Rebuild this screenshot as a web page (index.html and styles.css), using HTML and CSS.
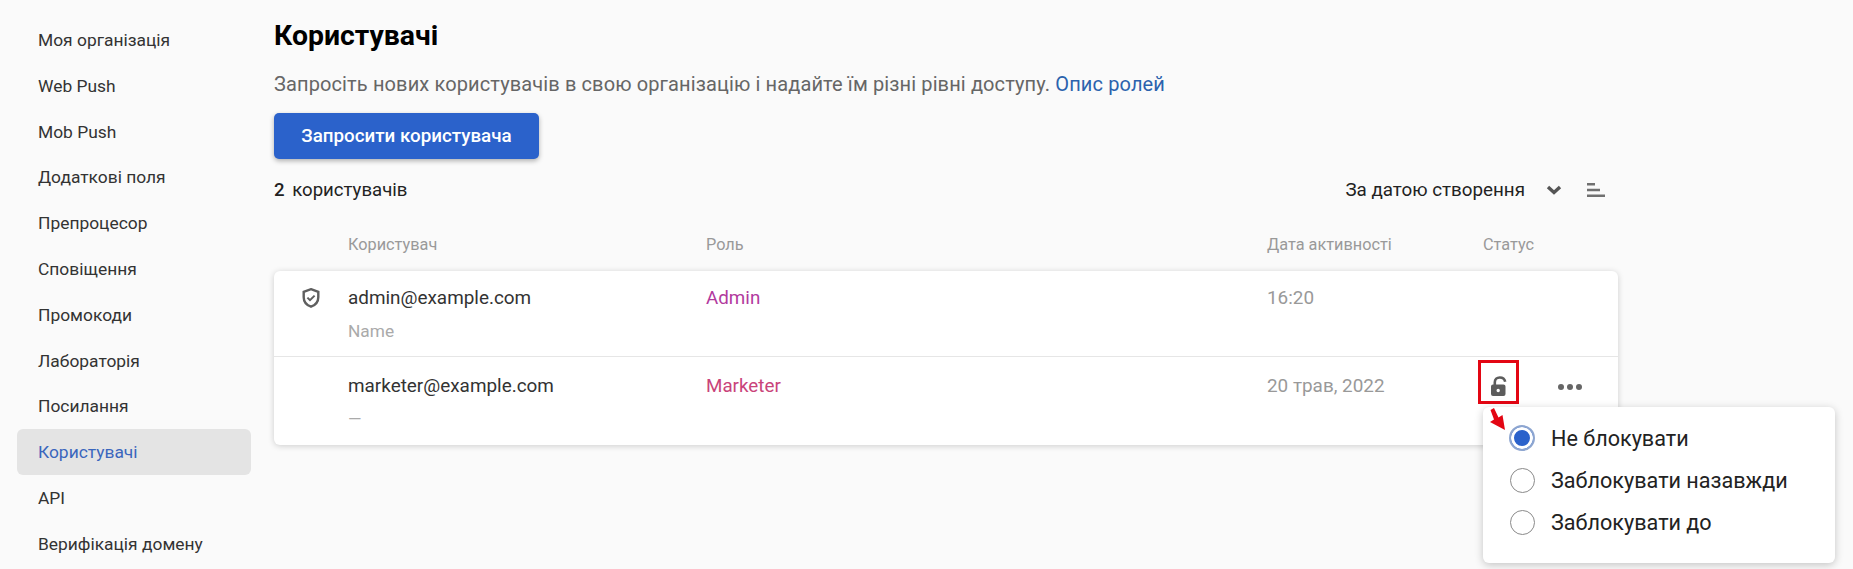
FILE: index.html
```html
<!DOCTYPE html>
<html lang="uk">
<head>
    <meta charset="UTF-8">
    <meta name="viewport" content="width=device-width, initial-scale=1.0">
    <title>Користувачі</title>
    <link rel="stylesheet" href="styles.css">
</head>
<body>
    <div class="layout">
        <nav class="sidebar">
            <a class="nav-item">Моя організація</a>
            <a class="nav-item">Web Push</a>
            <a class="nav-item">Mob Push</a>
            <a class="nav-item">Додаткові поля</a>
            <a class="nav-item">Препроцесор</a>
            <a class="nav-item">Сповіщення</a>
            <a class="nav-item">Промокоди</a>
            <a class="nav-item">Лабораторія</a>
            <a class="nav-item">Посилання</a>
            <a class="nav-item active">Користувачі</a>
            <a class="nav-item">API</a>
            <a class="nav-item">Верифікація домену</a>
        </nav>

        <main class="content">
            <h1 class="page-title">Користувачі</h1>
            <p class="page-desc">Запросіть нових користувачів в свою організацію і надайте їм різні рівні доступу. <a class="link">Опис ролей</a></p>
            <button class="btn-primary">Запросити користувача</button>

            <div class="toolbar">
                <div class="users-count"><b>2</b> користувачів</div>
                <div class="sort">
                    <span class="sort-label">За датою створення</span>
                    <svg class="sort-chevron" width="16" height="10" viewBox="0 0 16 10"><path d="M2 2l6 5.500L14 2" fill="none" stroke="#555" stroke-width="3.400"/></svg>
                    <svg class="sort-order" width="18" height="14" viewBox="0 0 18 14"><path d="M0 1.200h8M0 7h13M0 12.800h18" fill="none" stroke="#707070" stroke-width="2.400"/></svg>
                </div>
            </div>

            <div class="table-head">
                <div></div>
                <div>Користувач</div>
                <div>Роль</div>
                <div>Дата активності</div>
                <div>Статус</div>
            </div>

            <div class="card">
                <div class="row">
                    <div class="row-icon">
                        <svg width="18" height="20" viewBox="0 0 18 20"><path d="M9 1.200l7.300 2.600v5.400c0 4.400-3 7.900-7.300 9.500-4.300-1.600-7.300-5.100-7.300-9.500V3.800z" fill="none" stroke="#5f5f5f" stroke-width="2.400"/><path d="M5.400 9.600l2.600 2.600 4.600-4.600" fill="none" stroke="#5f5f5f" stroke-width="2"/></svg>
                    </div>
                    <div class="user">
                        <div class="user-email">admin@example.com</div>
                        <div class="user-name">Name</div>
                    </div>
                    <div class="role role-admin">Admin</div>
                    <div class="date">16:20</div>
                </div>
                <div class="row row-last">
                    <div class="row-icon"></div>
                    <div class="user">
                        <div class="user-email">marketer@example.com</div>
                        <div class="user-name">—</div>
                    </div>
                    <div class="role role-marketer">Marketer</div>
                    <div class="date">20 трав, 2022</div>
                    <div class="status">
                        <svg width="16" height="20" viewBox="0 0 16 20"><path d="M3.800 9V6.200C3.800 3.400 5.900 1.500 8.800 1.500c2.800 0 4.800 1.500 5.400 4.300" fill="none" stroke="#5c5c5c" stroke-width="2.600"/><path fill-rule="evenodd" d="M2 8.500h10.500a2 2 0 0 1 2 2V18a2 2 0 0 1-2 2H2a2 2 0 0 1-2-2v-7.500a2 2 0 0 1 2-2zm5.200 4.300a1.700 1.700 0 1 0 0 3.400 1.700 1.700 0 0 0 0-3.400z" fill="#5c5c5c"/></svg>
                    </div>
                    <div class="more"><i></i><i></i><i></i></div>
                </div>
            </div>
        </main>
    </div>

    <!-- annotation over the status icon -->
    <div class="highlight-box"></div>
    <svg class="highlight-arrow" width="16" height="24" viewBox="0 0 16 24"><path d="M4 0l4.500 9.500 4-2.500L15 22 0 14l4-2.500L0.500 2z" fill="#e30613"/></svg>

    <div class="popover">
        <label class="option">
            <span class="radio checked"></span>
            Не блокувати
        </label>
        <label class="option">
            <span class="radio"></span>
            Заблокувати назавжди
        </label>
        <label class="option">
            <span class="radio"></span>
            Заблокувати до
        </label>
    </div>
</body>
</html>
```

FILE: styles.css
```css
html, body {
    height: 100%;
}

body {
    margin: 0;
    background-color: #fafafa;
    font-family: Roboto, "Noto Sans", sans-serif;
    color: #222;
    overflow: hidden;
}

.layout {
    display: flex;
}

.sidebar {
    width: 234px;
    margin-left: 17px;
    padding-top: 17px;
    flex-shrink: 0;
}

.nav-item {
    display: block;
    height: 45.8px;
    line-height: 46px;
    padding-left: 21px;
    font-size: 17.4px;
    color: #333;
    border-radius: 6px;
    box-sizing: border-box;
}

.nav-item.active {
    background-color: #e4e4e4;
    color: #3a66bd;
}

.content {
    width: 1344px;
    margin-left: 23px;
}

.page-title {
    margin: 20px 0 0;
    font-size: 28.4px;
    line-height: 32px;
    font-weight: 700;
    color: #000;
}

.page-desc {
    margin: 19px 0 0;
    font-size: 20px;
    letter-spacing: 0.12px;
    line-height: 26px;
    color: #666;
}

.link {
    color: #2b62ad;
}

.btn-primary {
    display: block;
    width: 265px;
    height: 46px;
    margin-top: 16px;
    border: none;
    border-radius: 5px;
    background-color: #2b62cb;
    box-shadow: 0 2px 5px rgba(0, 0, 0, 0.3);
    color: #fff;
    font-family: inherit;
    font-size: 18.8px;
    font-weight: 500;
}

.toolbar {
    display: flex;
    justify-content: space-between;
    align-items: center;
    height: 30px;
    margin-top: 16px;
}

.users-count {
    font-size: 18.6px;
    color: #222;
}

.users-count b {
    font-weight: 500;
    margin-right: 3px;
}

.sort {
    display: flex;
    align-items: center;
    margin-right: 13px;
}

.sort-label {
    font-size: 18.8px;
    color: #222;
}

.sort-chevron {
    margin-left: 21px;
}

.sort-order {
    margin-left: 25px;
}

.table-head {
    display: grid;
    grid-template-columns: 74px 358px 561px 216px 1fr;
    height: 20px;
    margin-top: 30px;
    font-size: 16.3px;
    line-height: 20px;
    color: #999;
}

.card {
    margin-top: 16px;
    background: #fff;
    border-radius: 6px;
    box-shadow: 0 1px 6px rgba(0, 0, 0, 0.18);
}

.row {
    display: grid;
    grid-template-columns: 74px 358px 561px 216px 70px 1fr;
    height: 86px;
    box-sizing: border-box;
    padding-top: 15px;
    border-bottom: 1px solid #e6e6e6;
}

.row-last {
    height: 88px;
    border-bottom: none;
    padding-top: 17px;
}

.row-icon {
    display: flex;
    justify-content: center;
    align-items: flex-start;
    padding-top: 2px;
}

.row-icon svg {
    margin-left: -1px;
}

.user-email {
    font-size: 18.9px;
    line-height: 24px;
    color: #333;
}

.user-name {
    margin-top: 9px;
    font-size: 17.3px;
    line-height: 24px;
    color: #aaa;
}

.row-last .user-name {
    margin-top: 9px;
}

.role {
    font-size: 18.8px;
    line-height: 24px;
}

.role-admin {
    color: #b23a9e;
}

.role-marketer {
    color: #c9437a;
}

.date {
    font-size: 18.9px;
    line-height: 24px;
    color: #999;
}

.status {
    padding-left: 8px;
    padding-top: 2px;
}

.more {
    display: flex;
    gap: 3px;
    padding-left: 5px;
    padding-top: 10px;
}

.more i {
    width: 6px;
    height: 6px;
    border-radius: 50%;
    background-color: #666;
}

.highlight-box {
    position: absolute;
    left: 1478px;
    top: 360px;
    width: 41px;
    height: 44px;
    border: 3px solid #e30613;
    box-sizing: border-box;
}

.highlight-arrow {
    position: absolute;
    left: 1490px;
    top: 408px;
    z-index: 2;
}

.popover {
    position: absolute;
    left: 1483px;
    top: 407px;
    width: 352px;
    height: 156px;
    box-sizing: border-box;
    padding-top: 10px;
    background: #fff;
    border-radius: 6px;
    box-shadow: 0 2px 8px rgba(0, 0, 0, 0.22);
}

.option {
    display: flex;
    align-items: center;
    gap: 17px;
    height: 42px;
    padding-left: 27px;
    font-size: 21.6px;
    color: #222;
}

.radio {
    width: 25px;
    height: 25px;
    margin: 0 -0.5px;
    border: 1px solid #8a8a8a;
    border-radius: 50%;
    box-sizing: border-box;
    background: #fff;
}

.radio.checked {
    border: 2px solid #8ea6d0;
    background: #2b62cb;
    box-shadow: inset 0 0 0 3px #fff;
    width: 26px;
    height: 26px;
    margin: 0 -1px;
}
```
